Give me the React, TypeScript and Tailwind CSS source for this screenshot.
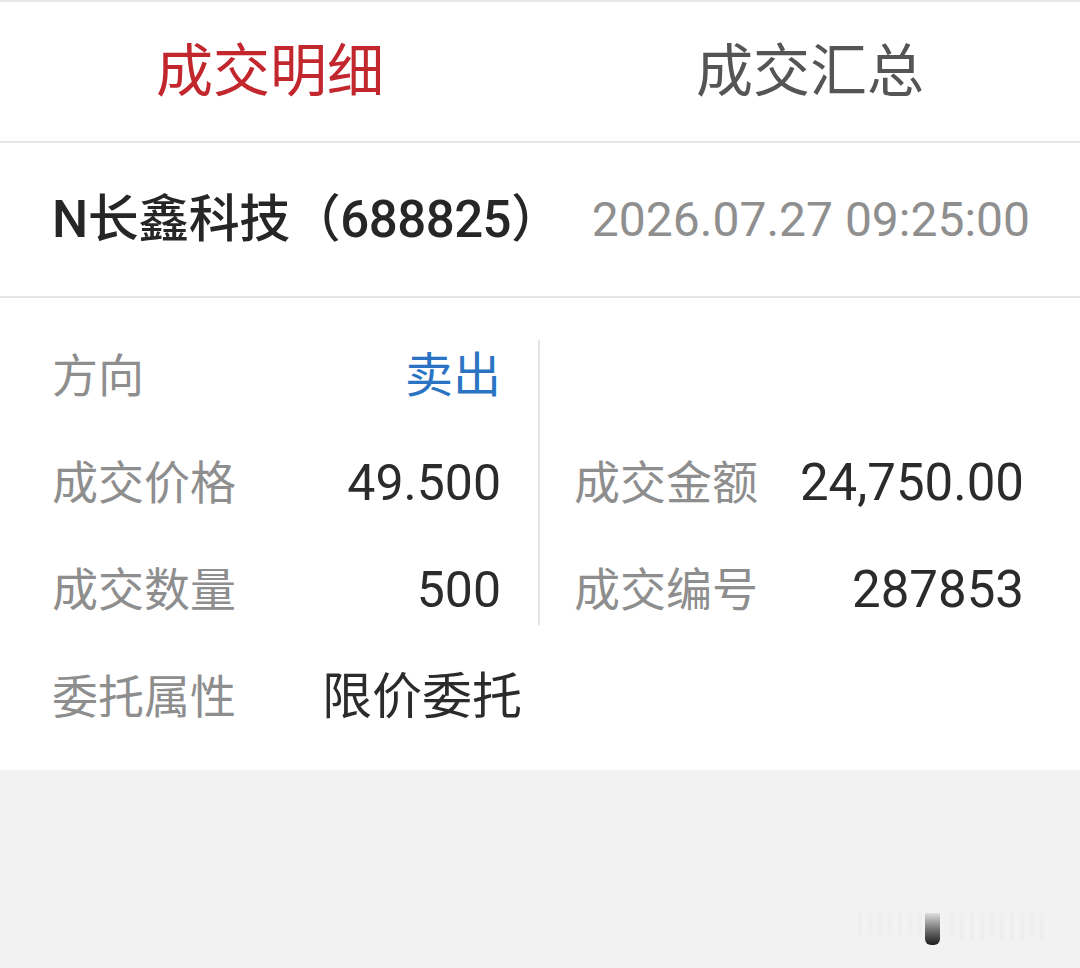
import React from "react";

const font = { fontFamily: "Roboto, 'Noto Sans CJK SC', sans-serif" };

function Row({ label, value, valueClass = "text-[#2b2b2b] text-[50px]" }: { label: string; value: string; valueClass?: string }) {
  return (
    <div className="flex h-[107px] items-center justify-between">
      <span className="text-[46px] text-[#8e8e8e] leading-none">{label}</span>
      <span className={`leading-none ${valueClass}`}>{value}</span>
    </div>
  );
}

export default function App() {
  return (
    <div className="relative min-h-[968px] w-[1080px] bg-[#f2f2f2]" style={font}>
      {/* tabs */}
      <div className="h-[2px] bg-[#e8e8e8]" />
      <div className="flex h-[141px] border-b-2 border-[#e6e6e6] bg-white">
        <div className="flex flex-1 items-center justify-center text-[57px] text-[#c1272d]">成交明细</div>
        <div className="flex flex-1 items-center justify-center text-[57px] text-[#555555]">成交汇总</div>
      </div>

      {/* stock header */}
      <div className="flex h-[155px] items-center justify-between border-b-2 border-[#e6e6e6] bg-white pl-[52px] pr-[50px]">
        <span className="text-[51px] font-medium text-[#262626] leading-none tracking-[-0.5px]">N长鑫科技（688825）</span>
        <span className="text-[48px] text-[#8f8f8f] leading-none">2026.07.27 09:25:00</span>
      </div>

      {/* trade detail */}
      <div className="bg-white pb-[20px] pl-[52px] pr-[56px] pt-[24px]">
        <div className="flex">
          <div className="w-[449px]">
            <Row label="方向" value="卖出" valueClass="text-[#2a74c3] text-[48px]" />
            <Row label="成交价格" value="49.500" />
            <Row label="成交数量" value="500" />
          </div>
          <div className="my-[18px] ml-[37px] w-[2px] bg-[#e4e4e4]" />
          <div className="ml-[34px] flex-1">
            <div className="h-[107px]" />
            <Row label="成交金额" value="24,750.00" valueClass="text-[#2b2b2b] text-[51px]" />
            <Row label="成交编号" value="287853" valueClass="text-[#2b2b2b] text-[51px]" />
          </div>
        </div>
        <div className="flex h-[107px] items-center">
          <span className="w-[270px] text-[46px] text-[#8e8e8e] leading-none">委托属性</span>
          <span className="text-[50px] text-[#2b2b2b] leading-none">限价委托</span>
        </div>
      </div>

      {/* watermark mark */}
      <div className="absolute left-[925px] top-[913px] h-[32px] w-[15px] rounded-b-[6px] bg-gradient-to-b from-[#e0e0e0] to-[#1e1e1e]" />
      <div className="absolute left-[858px] top-[913px] flex gap-[6px]">
        {[0, 1, 2, 3, 4, 5, 6].map((i) => (
          <div key={i} className="h-[22px] w-[4px] bg-[#eeeeee]" />
        ))}
      </div>
      <div className="absolute left-[950px] top-[913px] flex gap-[6px]">
        {[0, 1, 2, 3, 4, 5, 6, 7, 8, 9].map((i) => (
          <div key={i} className="h-[26px] w-[4px] bg-[#eeeeee]" />
        ))}
      </div>
    </div>
  );
}
